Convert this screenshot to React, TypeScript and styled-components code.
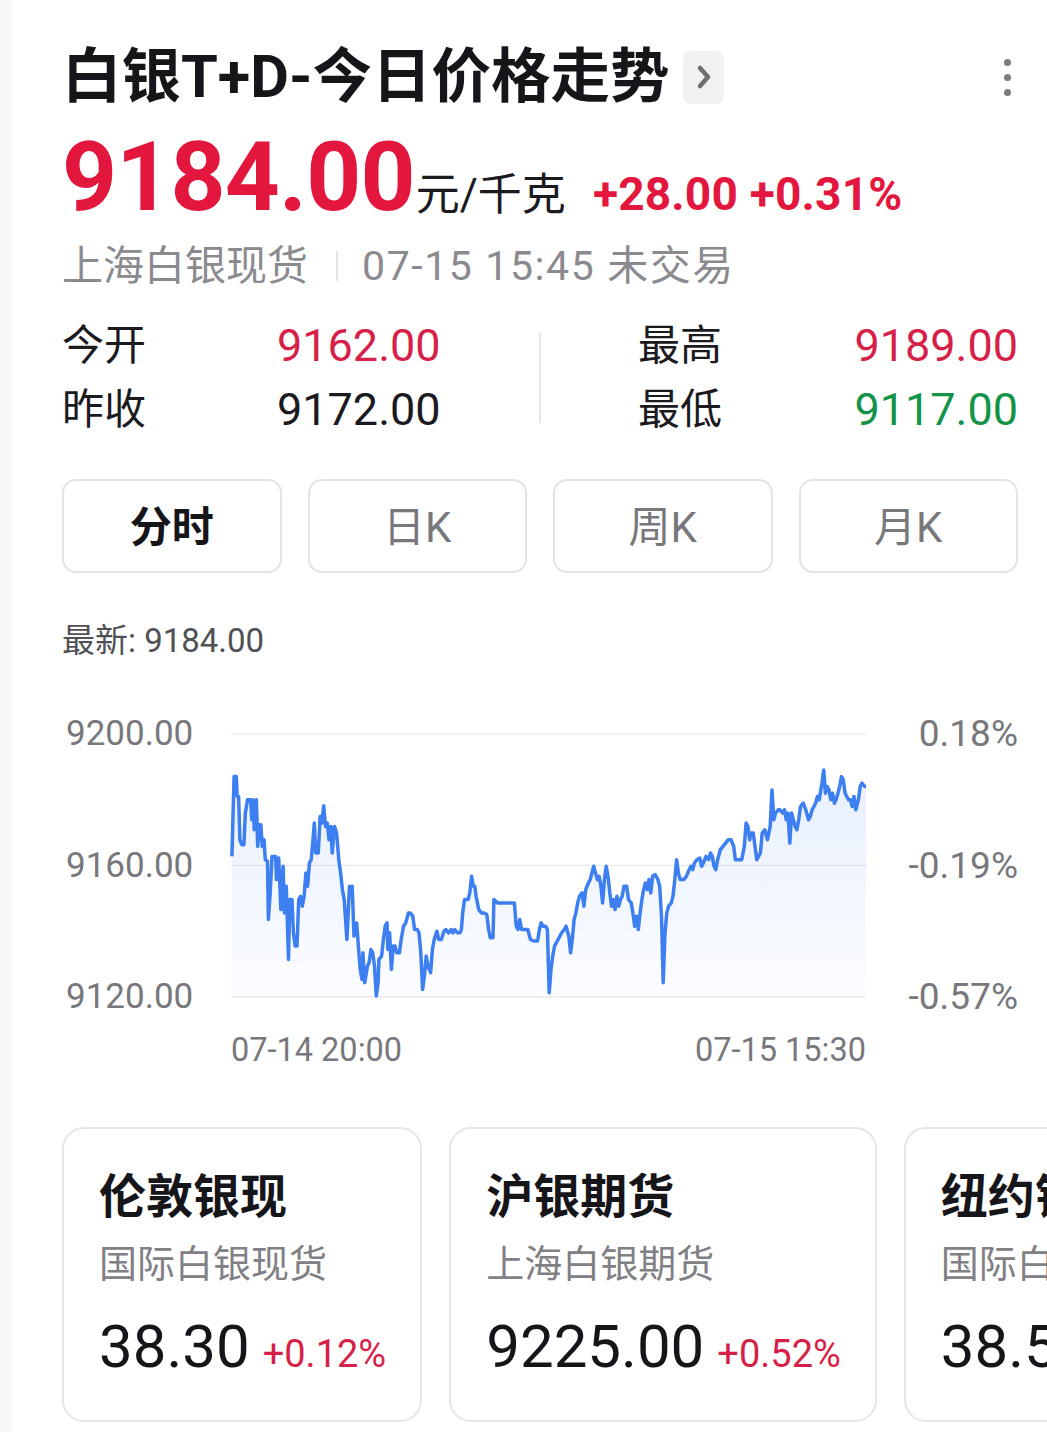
import * as React from 'react';
import styled, { createGlobalStyle } from 'styled-components';

const RED = '#e3173e';
const SOFT_RED = '#d61f49';
const GREEN = '#14934a';
const GRAY = '#77777c';

const GlobalStyle = createGlobalStyle`
    html, body {
        margin: 0;
        padding: 0;
        background: #f6f6f7;
        overflow: hidden;
    }
    body {
        font-family: Roboto, "Noto Sans CJK SC", sans-serif;
        color: #1a1a1f;
    }
`;

const Page = styled.div`
    margin-left: 12px;
    height: 1432px;
    box-sizing: border-box;
    padding: 45px 29px 0 50px;
    background: #fff;
    overflow: hidden;
`;

const Header = styled.div`
    display: flex;
    align-items: center;
    height: 64px;
`;
const Title = styled.h1`
    margin: 0;
    font-size: 59.5px;
    line-height: 64px;
    font-weight: 700;
    color: #16161a;
`;
const ChevronBox = styled.span`
    width: 41px;
    height: 53px;
    margin-left: 14px;
    border-radius: 8px;
    background: #f1f1f3;
    display: flex;
    align-items: center;
    justify-content: center;
`;
const MoreDots = styled.div`
    margin-left: auto;
    margin-right: 7px;
    display: flex;
    flex-direction: column;
    gap: 8px;
`;
const Dot = styled.span`
    width: 7px;
    height: 7px;
    border-radius: 50%;
    background: #7b7b80;
`;

const PriceRow = styled.div`
    display: flex;
    align-items: baseline;
    margin-top: 20px;
    height: 96px;
`;
const BigPrice = styled.span`
    font-size: 96px;
    line-height: 96px;
    font-weight: 700;
    letter-spacing: -0.8px;
    color: ${RED};
`;
const Unit = styled.span`
    font-size: 44px;
    margin-left: 1px;
    color: #1a1a1f;
`;
const Change = styled.span`
    font-size: 46px;
    font-weight: 700;
    margin-left: 27px;
    letter-spacing: 0.2px;
    color: ${RED};
`;

const MetaRow = styled.div`
    display: flex;
    align-items: center;
    margin-top: 16px;
    font-size: 41px;
    line-height: 50px;
    color: #8a8a8f;
`;
const MetaDivider = styled.span`
    width: 2px;
    height: 30px;
    margin: 0 24px 0 28px;
    background: #e4e4e6;
`;
const MetaTime = styled.span`
    letter-spacing: 1.6px;
`;

const Stats = styled.div`
    display: grid;
    grid-template-columns: 1fr 2px 1fr;
    align-items: center;
    margin-top: 23px;
`;
const StatGroup = styled.div<{ $right?: boolean }>`
    display: grid;
    grid-template-columns: ${(p) => (p.$right ? '1fr auto' : '215px 1fr')};
    padding-left: ${(p) => (p.$right ? '97px' : '0')};
`;
const StatDivider = styled.div`
    width: 2px;
    height: 90px;
    background: #e6e6e8;
`;
const StatLabel = styled.span`
    font-size: 42px;
    line-height: 64px;
    color: #1a1a1f;
`;
const StatValue = styled.span<{ $tone: 'up' | 'down' | 'flat' }>`
    font-size: 45px;
    line-height: 64px;
    color: ${(p) => (p.$tone === 'up' ? SOFT_RED : p.$tone === 'down' ? GREEN : '#1a1a1f')};
`;

const Tabs = styled.div`
    display: grid;
    grid-template-columns: repeat(4, 1fr);
    gap: 26px;
    margin-top: 37px;
`;
const Tab = styled.div<{ $active?: boolean }>`
    height: 94px;
    box-sizing: border-box;
    padding-bottom: 6px;
    border: 2px solid #e4e4e6;
    border-radius: 14px;
    display: flex;
    align-items: center;
    justify-content: center;
    font-size: 42px;
    font-weight: ${(p) => (p.$active ? 700 : 400)};
    color: ${(p) => (p.$active ? '#16161a' : GRAY)};
`;

const Latest = styled.div`
    margin-top: 48px;
    font-size: 33px;
    line-height: 40px;
    color: #505055;
`;

const ChartGrid = styled.div`
    display: grid;
    grid-template-columns: 169px 635px 1fr;
    margin-top: 55px;
`;
const Axis = styled.div<{ $right?: boolean }>`
    height: 299px;
    display: flex;
    flex-direction: column;
    justify-content: space-between;
    align-items: ${(p) => (p.$right ? 'flex-end' : 'flex-start')};
    padding-left: ${(p) => (p.$right ? '0' : '4px')};
    font-size: ${(p) => (p.$right ? '37px' : '35px')};
    line-height: 36px;
    color: ${GRAY};
`;
const Plot = styled.svg`
    display: block;
    margin-top: 18px;
    overflow: visible;
`;
const TimeAxis = styled.div`
    grid-column: 2;
    display: flex;
    justify-content: space-between;
    margin-top: 17px;
    font-size: 32.5px;
    line-height: 36px;
    color: ${GRAY};
`;

const CardRow = styled.div`
    display: flex;
    gap: 27px;
    margin-top: 59px;
`;
const Card = styled.div`
    flex: none;
    height: 295px;
    box-sizing: border-box;
    padding: 38px 34px 0 35px;
    border: 2px solid #e6e6e8;
    border-radius: 22px;
`;
const CardTitle = styled.div`
    font-size: 47px;
    line-height: 60px;
    font-weight: 700;
    color: #16161a;
`;
const CardSub = styled.div`
    margin-top: 12px;
    font-size: 38px;
    line-height: 50px;
    color: #808085;
`;
const CardPriceLine = styled.div`
    display: flex;
    align-items: baseline;
    margin-top: 23px;
`;
const CardPrice = styled.span`
    font-size: 60px;
    line-height: 70px;
    color: #16161a;
`;
const CardChange = styled.span`
    margin-left: 13px;
    font-size: 38px;
    color: ${SOFT_RED};
`;

// trace of the intraday line, in the raw units it was measured in
// x: 68..1493, y: 102 (9200) .. 893 (9120)
const TRACE: number[] = [
    70, 470, 75, 230, 80, 230, 82, 290, 85, 290, 88, 420, 92, 435, 97, 435, 100, 340, 105, 300,
    112, 300, 115, 360, 118, 300, 120, 390, 125, 300, 128, 440, 132, 375, 135, 375, 138, 440,
    142, 420, 145, 480, 150, 485, 152, 660, 156, 580, 160, 470, 168, 470, 170, 540, 175, 475,
    180, 630, 185, 500, 188, 640, 192, 560, 197, 780, 200, 600, 205, 600, 208, 700, 212, 740,
    216, 740, 220, 600, 224, 590, 228, 620, 232, 590, 236, 520, 240, 560, 244, 490, 248, 480,
    252, 420, 255, 370, 258, 460, 264, 460, 268, 350, 272, 370, 276, 318, 280, 380, 284, 370,
    288, 420, 292, 380, 295, 460, 300, 380, 305, 400, 310, 480, 314, 520, 318, 570, 322, 600,
    328, 720, 334, 560, 338, 580, 340, 560, 344, 710, 350, 670, 355, 760, 358, 810, 362, 840,
    364, 760, 368, 850, 374, 800, 378, 790, 382, 750, 386, 760, 390, 800, 394, 890, 398, 850,
    400, 780, 406, 770, 410, 720, 414, 680, 418, 670, 420, 750, 424, 700, 428, 810, 432, 740,
    436, 740, 440, 760, 446, 760, 450, 720, 455, 680, 460, 670, 466, 640, 470, 640, 476, 650,
    480, 690, 486, 690, 490, 700, 494, 760, 498, 870, 502, 830, 506, 770, 510, 800, 516, 820,
    520, 750, 524, 720, 530, 695, 534, 720, 540, 720, 546, 695, 550, 690, 556, 700, 562, 690,
    566, 700, 570, 690, 576, 700, 582, 700, 585, 690, 588, 640, 592, 600, 600, 600, 604, 580,
    608, 530, 612, 560, 615, 560, 618, 590, 624, 630, 630, 640, 636, 640, 642, 645, 646, 690,
    650, 715, 656, 715, 658, 600, 666, 610, 690, 610, 704, 610, 708, 680, 712, 690, 716, 660,
    720, 690, 734, 690, 740, 720, 748, 725, 756, 725, 760, 690, 764, 670, 768, 680, 774, 680,
    778, 690, 782, 880, 786, 810, 790, 770, 794, 740, 798, 730, 802, 720, 806, 710, 810, 700,
    816, 690, 820, 680, 826, 710, 830, 760, 834, 720, 838, 660, 842, 640, 846, 610, 850, 590,
    856, 580, 860, 620, 864, 570, 870, 550, 874, 540, 878, 520, 882, 500, 886, 520, 890, 540,
    894, 530, 898, 560, 902, 610, 906, 540, 910, 500, 914, 530, 918, 580, 922, 620, 926, 600,
    930, 630, 934, 590, 938, 620, 942, 600, 946, 590, 950, 560, 956, 560, 960, 600, 966, 610,
    970, 640, 974, 680, 978, 650, 982, 690, 986, 640, 990, 600, 994, 570, 998, 550, 1002, 570,
    1006, 540, 1010, 580, 1014, 530, 1020, 525, 1026, 540, 1030, 560, 1034, 650, 1038, 850,
    1042, 700, 1046, 640, 1050, 620, 1056, 610, 1060, 590, 1064, 540, 1068, 480, 1072, 520,
    1076, 540, 1084, 540, 1090, 530, 1096, 510, 1100, 500, 1104, 510, 1108, 490, 1114, 480,
    1120, 475, 1124, 500, 1128, 490, 1134, 470, 1140, 480, 1144, 460, 1148, 470, 1152, 500,
    1156, 510, 1160, 480, 1166, 450, 1172, 440, 1178, 430, 1184, 420, 1190, 420, 1196, 440,
    1200, 480, 1206, 480, 1214, 480, 1220, 440, 1224, 370, 1228, 380, 1232, 420, 1236, 400,
    1240, 400, 1244, 440, 1248, 480, 1252, 470, 1256, 460, 1260, 400, 1266, 390, 1272, 420,
    1278, 380, 1282, 270, 1286, 360, 1290, 340, 1296, 330, 1300, 330, 1306, 340, 1310, 330,
    1314, 360, 1318, 340, 1322, 430, 1326, 340, 1330, 360, 1334, 380, 1338, 390, 1342, 360,
    1346, 320, 1352, 310, 1358, 330, 1364, 360, 1368, 350, 1372, 330, 1376, 320, 1380, 310,
    1384, 290, 1388, 300, 1394, 250, 1398, 210, 1402, 280, 1406, 260, 1410, 270, 1414, 300,
    1418, 280, 1422, 310, 1426, 300, 1430, 280, 1434, 260, 1438, 230, 1442, 240, 1446, 280,
    1450, 290, 1454, 300, 1458, 300, 1462, 320, 1466, 290, 1470, 330, 1476, 300, 1480, 260,
    1484, 250, 1490, 260, 1493, 260,
];

const PLOT_W = 635;
const PLOT_H = 263;

function tracePath() {
    const pts: string[] = [];
    for (let i = 0; i < TRACE.length; i += 2) {
        const x = ((TRACE[i] - 68) / 1425) * PLOT_W;
        const y = ((TRACE[i + 1] - 102) / 791) * PLOT_H;
        pts.push(`${x.toFixed(1)} ${y.toFixed(1)}`);
    }
    return 'M' + pts.join(' L');
}

const PriceChart = () => {
    const line = tracePath();
    const area = `${line} L${PLOT_W} ${PLOT_H} L0 ${PLOT_H} Z`;
    return (
        <Plot width={PLOT_W} height={PLOT_H} viewBox={`0 0 ${PLOT_W} ${PLOT_H}`}>
            <defs>
                <linearGradient id="fill" x1="0" y1="0" x2="0" y2="1">
                    <stop offset="0%" stopColor="#3d7ef0" stopOpacity="0.12" />
                    <stop offset="100%" stopColor="#3d7ef0" stopOpacity="0.02" />
                </linearGradient>
            </defs>
            {[0, PLOT_H / 2, PLOT_H].map((y) => (
                <line key={y} x1={0} x2={PLOT_W} y1={y} y2={y} stroke="#ececee" strokeWidth={1.5} />
            ))}
            <path d={area} fill="url(#fill)" />
            <path d={line} fill="none" stroke="#3d7ef0" strokeWidth={3.5} strokeLinejoin="round" />
        </Plot>
    );
};

const MARKETS = [
    { name: '伦敦银现', sub: '国际白银现货', price: '38.30', change: '+0.12%' },
    { name: '沪银期货', sub: '上海白银期货', price: '9225.00', change: '+0.52%' },
    { name: '纽约银期', sub: '国际白银期货', price: '38.57', change: '+0.10%' },
];

export default function App() {
    return (
        <Page>
            <GlobalStyle />
            <Header>
                <Title>白银T+D-今日价格走势</Title>
                <ChevronBox>
                    <svg width="18" height="28" viewBox="0 0 18 28">
                        <path d="M5 5 L13 14 L5 23" fill="none" stroke="#6e6e73" strokeWidth="4.5" strokeLinecap="round" strokeLinejoin="round" />
                    </svg>
                </ChevronBox>
                <MoreDots>
                    <Dot />
                    <Dot />
                    <Dot />
                </MoreDots>
            </Header>

            <PriceRow>
                <BigPrice>9184.00</BigPrice>
                <Unit>元/千克</Unit>
                <Change>+28.00 +0.31%</Change>
            </PriceRow>

            <MetaRow>
                上海白银现货
                <MetaDivider />
                <MetaTime>07-15 15:45 未交易</MetaTime>
            </MetaRow>

            <Stats>
                <StatGroup>
                    <StatLabel>今开</StatLabel>
                    <StatValue $tone="up">9162.00</StatValue>
                    <StatLabel>昨收</StatLabel>
                    <StatValue $tone="flat">9172.00</StatValue>
                </StatGroup>
                <StatDivider />
                <StatGroup $right>
                    <StatLabel>最高</StatLabel>
                    <StatValue $tone="up">9189.00</StatValue>
                    <StatLabel>最低</StatLabel>
                    <StatValue $tone="down">9117.00</StatValue>
                </StatGroup>
            </Stats>

            <Tabs>
                <Tab $active>分时</Tab>
                <Tab>日K</Tab>
                <Tab>周K</Tab>
                <Tab>月K</Tab>
            </Tabs>

            <Latest>最新: 9184.00</Latest>

            <ChartGrid>
                <Axis>
                    <span>9200.00</span>
                    <span>9160.00</span>
                    <span>9120.00</span>
                </Axis>
                <PriceChart />
                <Axis $right>
                    <span>0.18%</span>
                    <span>-0.19%</span>
                    <span>-0.57%</span>
                </Axis>
                <TimeAxis>
                    <span>07-14 20:00</span>
                    <span>07-15 15:30</span>
                </TimeAxis>
            </ChartGrid>

            <CardRow>
                {MARKETS.map((m) => (
                    <Card key={m.name}>
                        <CardTitle>{m.name}</CardTitle>
                        <CardSub>{m.sub}</CardSub>
                        <CardPriceLine>
                            <CardPrice>{m.price}</CardPrice>
                            <CardChange>{m.change}</CardChange>
                        </CardPriceLine>
                    </Card>
                ))}
            </CardRow>
        </Page>
    );
}
